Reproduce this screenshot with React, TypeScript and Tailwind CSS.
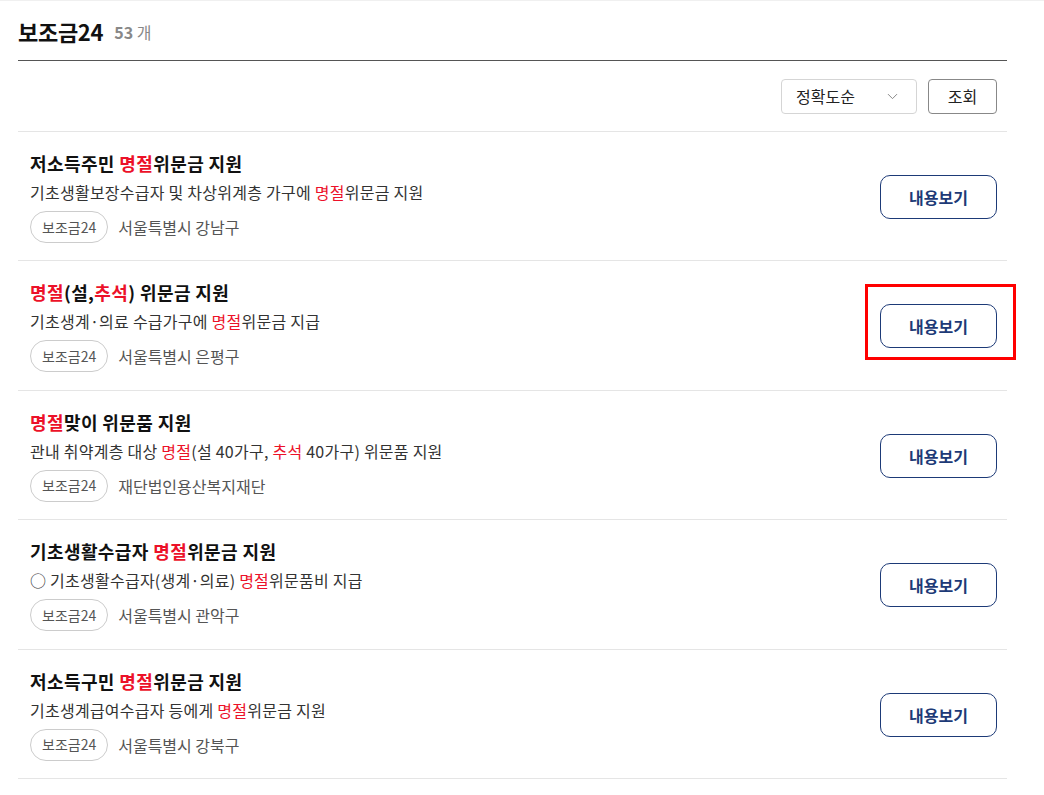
import { ChevronDown } from "lucide-react";

type Part = { t: string; red?: boolean };

const items: {
  title: Part[];
  desc: Part[];
  org: string;
  highlight?: boolean;
}[] = [
  {
    title: [{ t: "저소득주민 " }, { t: "명절", red: true }, { t: "위문금 지원" }],
    desc: [
      { t: "기초생활보장수급자 및 차상위계층 가구에 " },
      { t: "명절", red: true },
      { t: "위문금 지원" },
    ],
    org: "서울특별시 강남구",
  },
  {
    title: [
      { t: "명절", red: true },
      { t: "(설," },
      { t: "추석", red: true },
      { t: ") 위문금 지원" },
    ],
    desc: [
      { t: "기초생계·의료 수급가구에 " },
      { t: "명절", red: true },
      { t: "위문금 지급" },
    ],
    org: "서울특별시 은평구",
    highlight: true,
  },
  {
    title: [{ t: "명절", red: true }, { t: "맞이 위문품 지원" }],
    desc: [
      { t: "관내 취약계층 대상 " },
      { t: "명절", red: true },
      { t: "(설 40가구, " },
      { t: "추석", red: true },
      { t: " 40가구) 위문품 지원" },
    ],
    org: "재단법인용산복지재단",
  },
  {
    title: [{ t: "기초생활수급자 " }, { t: "명절", red: true }, { t: "위문금 지원" }],
    desc: [
      { t: "○ 기초생활수급자(생계·의료) " },
      { t: "명절", red: true },
      { t: "위문품비 지급" },
    ],
    org: "서울특별시 관악구",
  },
  {
    title: [{ t: "저소득구민 " }, { t: "명절", red: true }, { t: "위문금 지원" }],
    desc: [
      { t: "기초생계급여수급자 등에게 " },
      { t: "명절", red: true },
      { t: "위문금 지원" },
    ],
    org: "서울특별시 강북구",
  },
];

function Parts({ parts }: { parts: Part[] }) {
  return (
    <>
      {parts.map((p, i) =>
        p.red ? (
          <span key={i} className="text-[#ec1129]">
            {p.t}
          </span>
        ) : (
          <span key={i}>{p.t}</span>
        )
      )}
    </>
  );
}

export default function App() {
  return (
    <div
      className="min-h-[795px] bg-white border-t border-[#f0f0f0]"
      style={{ fontFamily: '"Noto Sans CJK KR", "Noto Sans", sans-serif' }}
    >
      <div className="ml-[18px] w-[989px]">
        {/* HEADER */}
        <div className="h-[60px] flex items-center gap-[11px] border-b border-[#555]">
          <h2 className="text-[22px] font-bold text-[#111] leading-[28px] tracking-[-0.3px]">
            보조금24
          </h2>
          <span className="text-[16px] text-[#888] leading-[28px] pt-[2px]">
            <b className="font-bold">53</b> 개
          </span>
        </div>

        {/* CONTROLS */}
        <div className="h-[71px] flex items-center justify-end gap-[11px] pr-[10px] border-b border-[#e5e5e5]">
          <div className="w-[136px] h-[35px] flex items-center justify-between pl-[14px] pr-[15px] border border-[#d5d5d5] rounded-[4px] text-[16px] text-[#222]">
            <span>정확도순</span>
            <ChevronDown size={17} strokeWidth={1.4} className="text-[#888]" />
          </div>
          <button className="w-[69px] h-[35px] flex items-center justify-center border border-[#888] rounded-[4px] text-[16px] text-[#222]">
            조회
          </button>
        </div>

        {/* LIST */}
        {items.map((item, i) => (
          <div
            key={i}
            className="flex items-center justify-between pl-[12px] pr-[10px] pt-[19px] pb-[17.4px] border-b border-[#e5e5e5]"
          >
            <div>
              <h3 className="text-[18px] font-bold text-[#111] leading-[24px] tracking-[0.4px]">
                <Parts parts={item.title} />
              </h3>
              <p className="mt-[6px] text-[16px] text-[#333] leading-[22px] tracking-[0.25px]">
                <Parts parts={item.desc} />
              </p>
              <div className="mt-[8px] flex items-center gap-[10px]">
                <span className="h-[32px] px-[11px] flex items-center rounded-full border border-[#ccc] text-[14px] text-[#555]">
                  보조금24
                </span>
                <span className="text-[16px] text-[#555]">{item.org}</span>
              </div>
            </div>

            <div className="relative">
              <button className="w-[117px] h-[44px] flex items-center justify-center border border-[#1d3a77] rounded-[10px] text-[16px] font-bold text-[#1d3a77]">
                내용보기
              </button>
              {item.highlight && (
                <div className="absolute -left-[15px] -right-[19px] -top-[20px] -bottom-[12px] border-[3px] border-[#ff0000]" />
              )}
            </div>
          </div>
        ))}
      </div>
    </div>
  );
}
